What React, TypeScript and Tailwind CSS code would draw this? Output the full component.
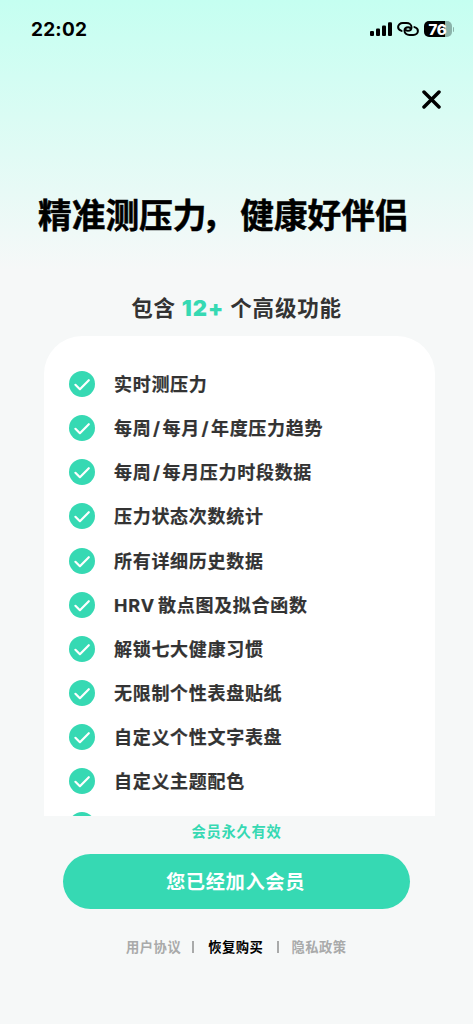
import React from 'react'

interface CheckIconProps {
  className?: string
}

const FEATURES: string[] = [
  '实时测压力',
  '每周/每月/年度压力趋势',
  '每周/每月压力时段数据',
  '压力状态次数统计',
  '所有详细历史数据',
  'HRV散点图及拟合函数',
  '解锁七大健康习惯',
  '无限制个性表盘贴纸',
  '自定义个性文字表盘',
  '自定义主题配色',
  '',
]

const CheckIcon: React.FC<CheckIconProps> = ({ className }) => (
  <svg viewBox="0 0 26 26" fill="none" className={className}>
    <circle cx="13" cy="13" r="13" fill="#36d9b3" />
    <path d="M6.4 13.8 10.9 18.2 19.8 9.2" stroke="#fff" strokeWidth="2.2" strokeLinecap="round" strokeLinejoin="round" />
  </svg>
)

// Adds a little air around latin text and slashes inside a Chinese label
const FeatureLabel: React.FC<{ text: string }> = ({ text }) => (
  <span className="pt-[2px] text-[18px] leading-none font-bold tracking-[0.7px] whitespace-nowrap text-[#333] [-webkit-text-stroke:0.2px]">
    {text.split(/(\/|HRV)/).map((part, i) => {
      if (part === '/') return <span key={i} className="mx-[1.7px]">/</span>
      if (part === 'HRV') return <span key={i} className="mr-[3px] tracking-[0.9px]">HRV</span>
      return part
    })}
  </span>
)

const StatusBar: React.FC = () => (
  <div className="flex h-[58px] items-center justify-between pr-[19px] pl-[31px]">
    <span className="text-[19px] leading-none font-bold tracking-[0.2px]">22:02</span>
    <div className="flex items-center gap-[5px]">
      {/* Cellular signal */}
      <svg width="22" height="14" viewBox="0 0 22 14" fill="#000">
        <rect x="0" y="9" width="4" height="5" rx="1.1" />
        <rect x="6" y="6.5" width="4" height="7.5" rx="1.1" />
        <rect x="12" y="3.5" width="4" height="10.5" rx="1.1" />
        <rect x="18" y="0.3" width="4" height="13.7" rx="1.1" />
      </svg>
      {/* Hotspot link */}
      <svg width="22" height="14" viewBox="0 0 22 14" fill="none" stroke="#000" strokeWidth="2" strokeLinecap="round">
        <path d="M4.6 8.9C2.5 8.4 1.1 7 1.1 5.1c0-2.3 2-4 4.7-4h3.7c2.9 0 5 1.8 5 4.1 0 2.2-1.7 3.6-3.7 3.6-.8 0-1.5-.3-2-.8" />
        <path d="M17.4 5.1c2.1.5 3.5 1.9 3.5 3.8 0 2.3-2 4-4.7 4h-3.7c-2.9 0-5-1.8-5-4.1 0-2.2 1.7-3.6 3.7-3.6.8 0 1.5.3 2 .8" />
      </svg>
      {/* Battery */}
      <div className="flex items-center gap-[1px]">
        <div className="flex h-[16px] w-[28px] items-center justify-center rounded-[5px] bg-[linear-gradient(to_right,#000_76%,#8bb3aa_76%)] text-[15px] leading-none font-extrabold tracking-[-0.3px] text-white">
          76
        </div>
        <span className="h-[5px] w-[1.5px] rounded-r-full bg-[#8bb3aa]" />
      </div>
    </div>
  </div>
)

const App: React.FC = () => {
  return (
    <div className="flex h-[1024px] w-[473px] flex-col overflow-hidden bg-[#f6f8f8] bg-[linear-gradient(to_bottom,#c5fff1_0px,#f6f8f8_270px)] font-['Inter','Noto_Sans_CJK_SC',sans-serif] text-black">
      <StatusBar />

      <div className="flex h-[83px] items-center justify-end pr-[32px]">
        <button aria-label="关闭">
          <svg width="19" height="19" viewBox="0 0 19 19" fill="none" stroke="#000" strokeWidth="3.5" strokeLinecap="round">
            <path d="M2 2 17 17M17 2 2 17" />
          </svg>
        </button>
      </div>

      <h1 className="mt-[50px] pl-[38px] text-[33.7px] leading-[50px] font-bold whitespace-nowrap [-webkit-text-stroke:0.5px]">
        精准测压力<span className="inline-block w-[33.7px] [font-feature-settings:'palt']">，</span>健康好伴侣
      </h1>

      <h2 className="mt-[51px] text-center text-[21.5px] leading-[32px] font-bold tracking-[0.8px] whitespace-nowrap text-[#333]">
        包含 <span className="text-[22px] font-black tracking-[1.1px] text-[#36d9b3]">12+</span> 个高级功能
      </h2>

      {/* Feature list, the last row scrolls out of view */}
      <div className="mt-[12px] ml-[44px] h-[480px] w-[391px] shrink-0 overflow-hidden rounded-t-[38px] bg-white pt-[26px] pl-[25px]">
        {FEATURES.map((feature, i) => (
          <div key={i} className="flex h-[44.15px] items-center gap-[19px]">
            <CheckIcon className="h-[26px] w-[26px] shrink-0" />
            <FeatureLabel text={feature} />
          </div>
        ))}
      </div>

      <p className="mt-[5px] text-center text-[14.3px] leading-[22px] font-bold tracking-[0.7px] text-[#36d9b3]">会员永久有效</p>

      <button className="mx-auto mt-[11px] h-[55px] w-[347px] shrink-0 rounded-full bg-[#36d9b3] pt-[2px] pr-[2px] text-[19.3px] font-bold tracking-[0.6px] text-white">
        您已经加入会员
      </button>

      <div className="mt-[28px] flex items-center pl-[126px] text-[13.3px] leading-[20px] font-bold tracking-[0.5px] text-[#a9aaaa]">
        <span>用户协议</span>
        <span className="ml-[11px] h-[12px] w-[2px] bg-[#a9aaaa]" />
        <span className="ml-[14px] text-black">恢复购买</span>
        <span className="ml-[14px] h-[12px] w-[2px] bg-[#a9aaaa]" />
        <span className="ml-[12px]">隐私政策</span>
      </div>
    </div>
  )
}

export default App
